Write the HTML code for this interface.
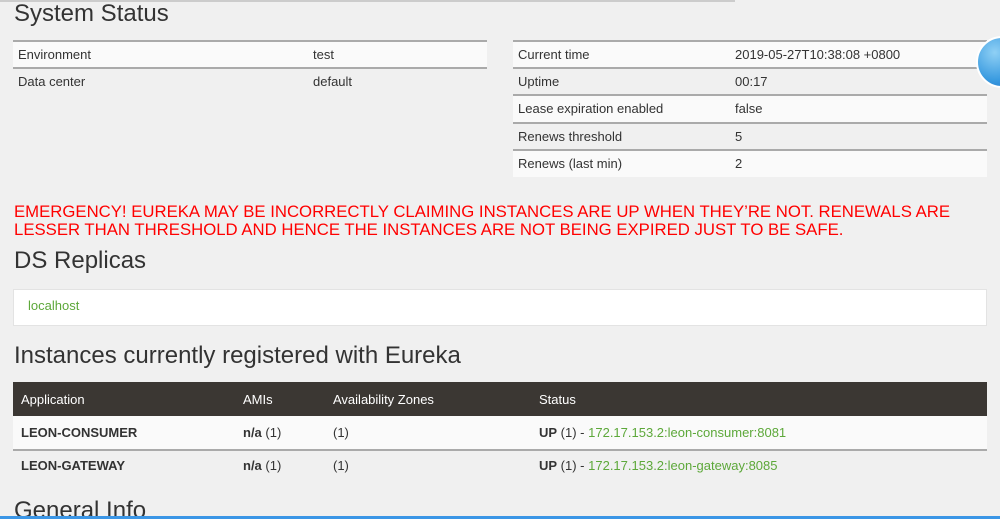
<!DOCTYPE html>
<html><head><style>
html,body{margin:0;width:1000px;height:519px;overflow:hidden}
body{background:#f0f0f0;font-family:"Liberation Sans",sans-serif;color:#333;position:relative}
.a{position:absolute;white-space:nowrap}
h{position:absolute;font-size:24px;color:#333;white-space:nowrap}
.tb{position:absolute;font-size:13px}
.row{position:absolute;left:0;right:0;height:26px;border-top:2px solid #aaa}
.row span{position:absolute;top:5px}
.g{color:#5da83a}
.sx{display:inline-block;transform-origin:0 0}
</style></head><body>
<div class="a" style="left:0;top:0;width:735px;height:2px;background:#ccc"></div>
<h style="left:14px;top:0px">System Status</h>
<div class="tb" style="left:13px;top:40px;width:474px">
 <div class="row" style="top:0;background:#fafafa"><span style="left:5px">Environment</span><span style="left:300px">test</span></div>
 <div class="row" style="top:27px"><span style="left:5px">Data center</span><span style="left:300px">default</span></div>
</div>
<div class="tb" style="left:513px;top:40px;width:474px">
 <div class="row" style="top:0;background:#fafafa"><span style="left:5px">Current time</span><span style="left:222px">2019-05-27T10:38:08 +0800</span></div>
 <div class="row" style="top:27px"><span style="left:5px">Uptime</span><span style="left:222px">00:17</span></div>
 <div class="row" style="top:54px;background:#fafafa"><span style="left:5px">Lease expiration enabled</span><span style="left:222px">false</span></div>
 <div class="row" style="top:82px"><span style="left:5px">Renews threshold</span><span style="left:222px">5</span></div>
 <div class="row" style="top:109px;background:#fafafa"><span style="left:5px">Renews (last min)</span><span style="left:222px">2</span></div>
</div>
<div class="a" style="left:976px;top:36px;width:48px;height:48px;border-radius:50%;background:radial-gradient(circle at 35% 30%,#8fd0f5,#3a9be0 60%,#1f6fc8);border:2px solid #fff"></div>
<div class="a" style="left:14px;top:203px;color:#f00;font-size:17px;line-height:18px"><span class="sx" style="transform:scaleX(0.985)">EMERGENCY! EUREKA MAY BE INCORRECTLY CLAIMING INSTANCES ARE UP WHEN THEY’RE NOT. RENEWALS ARE<br>LESSER THAN THRESHOLD AND HENCE THE INSTANCES ARE NOT BEING EXPIRED JUST TO BE SAFE.</span></div>
<h style="left:14px;top:247px">DS Replicas</h>
<div class="a" style="left:13px;top:289px;width:972px;height:35px;background:#fff;border:1px solid #e3e3e3"></div>
<div class="a g" style="left:28px;top:298px;font-size:13px">localhost</div>
<h style="left:14px;top:342px">Instances currently registered with Eureka</h>
<div class="a" style="left:13px;top:382px;width:974px;height:34px;background:#3b3733"></div>
<div class="a" style="left:13px;top:416px;width:974px;height:33px;background:#fafafa;border-bottom:2px solid #aaa"></div>
<div class="a" style="left:21px;top:392px;color:#fff;font-size:13px">Application</div>
<div class="a" style="left:243px;top:392px;color:#fff;font-size:13px">AMIs</div>
<div class="a" style="left:333px;top:392px;color:#fff;font-size:13px">Availability Zones</div>
<div class="a" style="left:539px;top:392px;color:#fff;font-size:13px">Status</div>
<div class="a" style="left:21px;top:425px;font-size:13px;font-weight:bold">LEON-CONSUMER</div>
<div class="a" style="left:243px;top:425px;font-size:13px"><b>n/a</b> (1)</div>
<div class="a" style="left:333px;top:425px;font-size:13px">(1)</div>
<div class="a" style="left:539px;top:425px;font-size:13px"><b>UP</b> (1) - <span class="g">172.17.153.2:leon-consumer:8081</span></div>
<div class="a" style="left:21px;top:458px;font-size:13px;font-weight:bold">LEON-GATEWAY</div>
<div class="a" style="left:243px;top:458px;font-size:13px"><b>n/a</b> (1)</div>
<div class="a" style="left:333px;top:458px;font-size:13px">(1)</div>
<div class="a" style="left:539px;top:458px;font-size:13px"><b>UP</b> (1) - <span class="g">172.17.153.2:leon-gateway:8085</span></div>
<h style="left:14px;top:497px">General Info</h>
<div class="a" style="left:0;top:516px;width:1000px;height:3px;background:#3b96e6"></div>
</body></html>
